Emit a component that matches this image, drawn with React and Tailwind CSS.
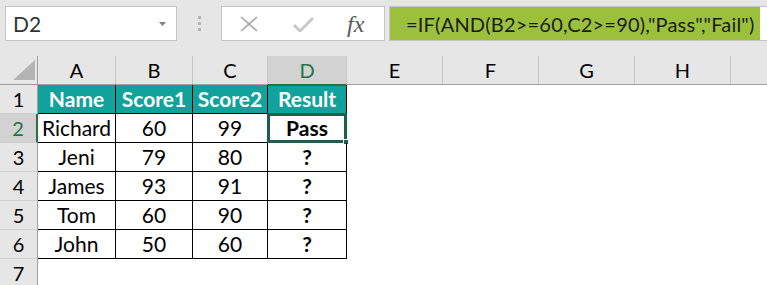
import React from "react";

const cols = [
  { key: "A", w: "w-[78px]" },
  { key: "B", w: "w-[77px]" },
  { key: "C", w: "w-[75px]" },
  { key: "D", w: "w-[79px]" },
  { key: "E", w: "w-[96px]" },
  { key: "F", w: "w-[96px]" },
  { key: "G", w: "w-[96px]" },
  { key: "H", w: "w-[96px]" },
];

const data = [
  ["Richard", "60", "99", "Pass"],
  ["Jeni", "79", "80", "?"],
  ["James", "93", "91", "?"],
  ["Tom", "60", "90", "?"],
  ["John", "50", "60", "?"],
];

const font = { fontFamily: "Lato, 'Open Sans', sans-serif" };

function TopBar() {
  return (
    <div className="h-[56px] bg-[#e6e6e6] flex items-start pt-[6px] pl-[5px]">
      <div className="w-[172px] h-[35px] bg-white border border-[#c6c6c6] flex items-center justify-between pl-[7px] pr-[10px]">
        <span className="text-[21px] text-[#333] leading-none">D2</span>
        <svg width="7" height="4" viewBox="0 0 7 4"><path d="M0 0h7L3.5 4z" fill="#808080" /></svg>
      </div>
      <div className="w-[44px] h-[35px] flex flex-col items-center justify-center gap-[3px]">
        <div className="w-[3px] h-[3px] bg-[#b4b4b4]" />
        <div className="w-[3px] h-[3px] bg-[#b4b4b4]" />
        <div className="w-[3px] h-[3px] bg-[#b4b4b4]" />
      </div>
      <div className="w-[164px] h-[35px] bg-white border border-[#c6c6c6] flex items-center">
        <svg className="ml-[18px]" width="18" height="16" viewBox="0 0 18 16">
          <path d="M1 1L17 15M17 1L1 15" stroke="#a6a6a6" strokeWidth="1.6" fill="none" />
        </svg>
        <svg className="ml-[35px]" width="21" height="16" viewBox="0 0 21 16">
          <path d="M1 9L7 15L20 2" stroke="#c8c8c8" strokeWidth="3" fill="none" />
        </svg>
        <span className="ml-[33px] text-[24px] italic text-[#595959] leading-none" style={{ fontFamily: "'Liberation Serif', serif" }}>
          fx
        </span>
      </div>
      <div className="ml-[4px] flex-1 h-[35px] bg-white border-y border-l border-[#c6c6c6] flex">
        <div className="w-[370px] h-full bg-[#9bc13c] flex items-center pl-[16px]">
          <span className="text-[20px] tracking-[0.2px] text-[#1b1b1b] leading-none whitespace-nowrap">=IF(AND(B2&gt;=60,C2&gt;=90),"Pass","Fail")</span>
        </div>
      </div>
    </div>
  );
}

function HeaderRow() {
  return (
    <div className="flex h-[29px] bg-[#e6e6e6] border-b border-[#9f9f9f]">
      <div className="w-[38px] shrink-0 border-r border-[#9f9f9f] relative">
        <svg className="absolute left-[13px] top-[4px]" width="22" height="20" viewBox="0 0 22 20">
          <path d="M22 0V20H0z" fill="#b4b4b4" />
        </svg>
      </div>
      {cols.map((c) => (
        <div
          key={c.key}
          className={`${c.w} shrink-0 border-r border-[#c6c6c6] flex items-center justify-center text-[20px] ${
            c.key === "D" ? "bg-[#d2d2d2] text-[#217346]" : "text-black"
          }`}
        >
          {c.key}
        </div>
      ))}
      <div className="flex-1" />
    </div>
  );
}

function RowHeader({ n, active }) {
  return (
    <div
      className={`w-[38px] shrink-0 flex items-center justify-center text-[20px] border-b border-[#d0d0d0] ${
        active ? "bg-[#d2d2d2] text-[#217346] border-r-2 border-r-[#217346]" : "bg-[#e6e6e6] text-black border-r border-r-[#9f9f9f]"
      }`}
    >
      {n}
    </div>
  );
}

export default function App() {
  return (
    <div className="w-[767px] h-[285px] overflow-hidden bg-white" style={font}>
      <TopBar />
      <HeaderRow />
      <div className="flex h-[29px]">
        <RowHeader n={1} />
        {["Name", "Score1", "Score2", "Result"].map((t, i) => (
          <div
            key={t}
            className={`${cols[i].w} shrink-0 bg-[#10a29b] text-white font-bold text-[21px] flex items-center justify-center border-r border-b border-black relative`}
          >
            {t}
            {i === 3 && <div className="absolute left-0 right-0 -top-[1px] h-[2px] bg-[#217346]" />}
          </div>
        ))}
      </div>
      {data.map((r, ri) => (
        <div key={ri} className="flex h-[29px]">
          <RowHeader n={ri + 2} active={ri === 0} />
          {r.map((v, i) => (
            <div
              key={i}
              className={`${cols[i].w} shrink-0 flex items-center justify-center text-[21px] text-black border-r border-b border-black relative ${
                i === 3 ? "font-bold" : ""
              }`}
            >
              {v}
              {ri === 0 && i === 3 && (
                <>
                  <div className="absolute -left-[1px] -top-[1px] -right-[1px] -bottom-[1px] border-[3px] border-[#1f5d4f]" />
                  <div className="absolute -right-[3px] -bottom-[3px] w-[6px] h-[6px] bg-[#1f5d4f] border border-white" />
                </>
              )}
            </div>
          ))}
        </div>
      ))}
      <div className="flex h-[29px]">
        <RowHeader n={7} />
      </div>
    </div>
  );
}
